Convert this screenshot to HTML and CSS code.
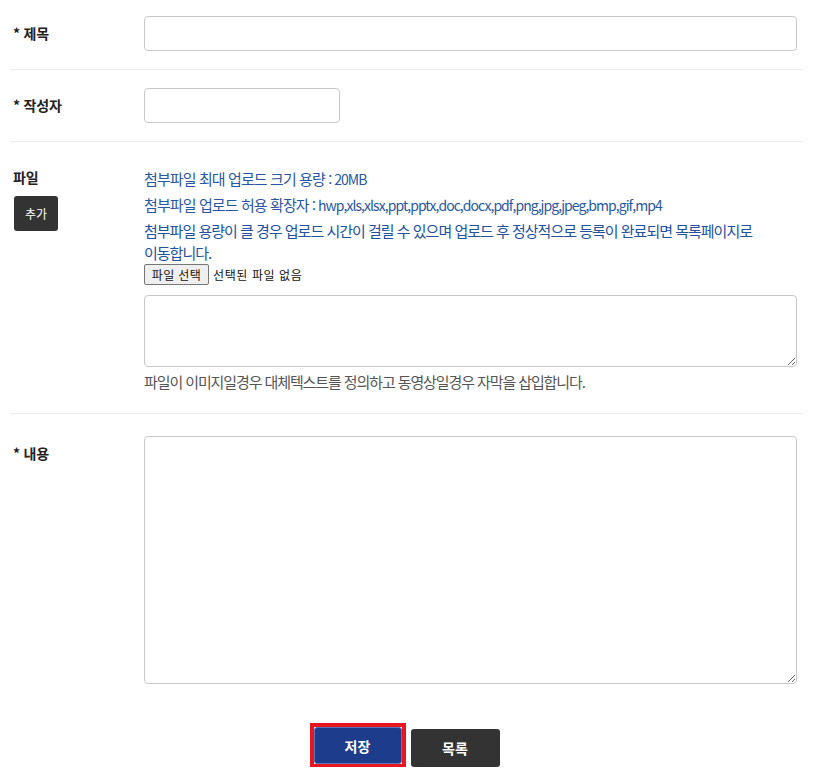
FILE: index.html
```html
<!DOCTYPE html>
<html lang="ko">
<head>
<meta charset="utf-8">
<title>글쓰기</title>
<link rel="stylesheet" href="styles.css">
</head>
<body>
<form class="form">
  <div class="row row-first">
    <label class="label" for="title">* 제목</label>
    <div class="field"><input id="title" class="input" type="text"></div>
  </div>
  <div class="row">
    <label class="label" for="writer">* 작성자</label>
    <div class="field"><input id="writer" class="input input-short" type="text"></div>
  </div>
  <div class="row row-file">
    <div class="label-col">
      <div class="label">파일</div>
      <button type="button" class="btn-add">추가</button>
    </div>
    <div class="field file-field">
      <p class="info">첨부파일 최대 업로드 크기 용량 <span class="latin">: 20MB</span></p>
      <p class="info">첨부파일 업로드 허용 확장자 <span class="latin">: hwp,xls,xlsx,ppt,pptx,doc,docx,pdf,png,jpg,jpeg,bmp,gif,mp4</span></p>
      <p class="info info-last">첨부파일 용량이 클 경우 업로드 시간이 걸릴 수 있으며 업로드 후 정상적으로 등록이 완료되면 목록페이지로 이동합니다.</p>
      <div class="file-picker">
        <span class="file-btn">파일 선택</span>
        <span class="file-name">선택된 파일 없음</span>
      </div>
      <textarea class="textarea textarea-alt"></textarea>
      <p class="help">파일이 이미지일경우 대체텍스트를 정의하고 동영상일경우 자막을 삽입합니다.</p>
    </div>
  </div>
  <div class="row row-last">
    <label class="label" for="content">* 내용</label>
    <div class="field"><textarea id="content" class="textarea textarea-content"></textarea></div>
  </div>
  <div class="actions">
    <button type="button" class="btn btn-save">저장</button>
    <button type="button" class="btn btn-list">목록</button>
  </div>
</form>
</body>
</html>
```

FILE: styles.css
```css
* { box-sizing: border-box; }
html, body {
  margin: 0;
  padding: 0;
  background: #fff;
}
body {
  font-family: "Noto Sans CJK KR", "Noto Sans", "Liberation Sans", sans-serif;
  font-size: 14px;
  color: #222;
  word-break: keep-all;
}
.form {
  margin-left: 10px;
  width: 793px;
}
.row {
  display: grid;
  grid-template-columns: 131px 1fr;
  padding: 18px 6px 18px 3px;
  border-bottom: 1px solid #ececec;
}
.row-first { padding-top: 16px; }
.row-file { padding-top: 18px; padding-bottom: 20px; }
.row-last { border-bottom: none; padding-top: 22px; padding-bottom: 0; }
.label {
  display: block;
  padding-top: 6px;
  line-height: 22px;
  font-weight: bold;
  font-size: 14px;
  letter-spacing: -0.2px;
  color: #222;
}
.label-col { display: flex; flex-direction: column; align-items: flex-start; }
.btn-add {
  margin-top: 8px;
  margin-left: 1px;
  width: 44px;
  height: 35px;
  border: none;
  border-radius: 3px;
  background: #333;
  color: #fff;
  font-family: inherit;
  font-size: 12px;
  padding: 0;
}
.field { min-width: 0; }
.input {
  display: block;
  width: 100%;
  height: 35px;
  border: 1px solid #c8c8c8;
  border-radius: 4px;
  background: #fff;
  padding: 0 10px;
  font-family: inherit;
  font-size: 14px;
}
.input-short { width: 196px; }
.file-field { padding-top: 8px; }
.info {
  margin: 0 0 4px;
  line-height: 22px;
  color: #2957a4;
  font-size: 15px;
  letter-spacing: -0.9px;
}
.info .latin {
  font-size: 14px;
  letter-spacing: -0.95px;
}
.info-last { margin-bottom: 0; color: #23509f; letter-spacing: -1px; }
.file-picker {
  display: flex;
  align-items: center;
  height: 21px;
}
.file-btn {
  display: inline-flex;
  align-items: center;
  justify-content: center;
  width: 65px;
  height: 21px;
  border: 1px solid #767676;
  border-radius: 2px;
  background: #efefef;
  font-size: 12px;
  color: #111;
  letter-spacing: 0.4px;
}
.file-name {
  margin-left: 4px;
  font-size: 12px;
  color: #111;
  letter-spacing: 0.6px;
}
.textarea {
  display: block;
  width: 100%;
  border: 1px solid #c8c8c8;
  border-radius: 4px;
  background: #fff;
  font-family: inherit;
  font-size: 14px;
  padding: 6px 10px;
}
.textarea-alt { margin-top: 10px; height: 72px; }
.textarea-content { height: 248px; }
.help {
  margin: 4px 0 0;
  line-height: 22px;
  font-size: 15px;
  color: #555;
  letter-spacing: -1.1px;
}
.actions {
  display: flex;
  justify-content: center;
  align-items: flex-start;
  gap: 9px;
  margin-top: 43px;
}
.btn {
  width: 89px;
  height: 38px;
  border: none;
  border-radius: 3px;
  color: #fff;
  font-family: inherit;
  font-size: 14px;
  font-weight: bold;
  padding: 0;
}
.btn-save {
  position: relative;
  width: 88px;
  height: 37px;
  background: #1e3c8c;
  border: 1px solid #5a75b8;
}
.btn-save::after {
  content: "";
  position: absolute;
  inset: -5px;
  border: 4px solid #e8161f;
}
.btn-list { background: #333; margin-top: 2px; }
```
